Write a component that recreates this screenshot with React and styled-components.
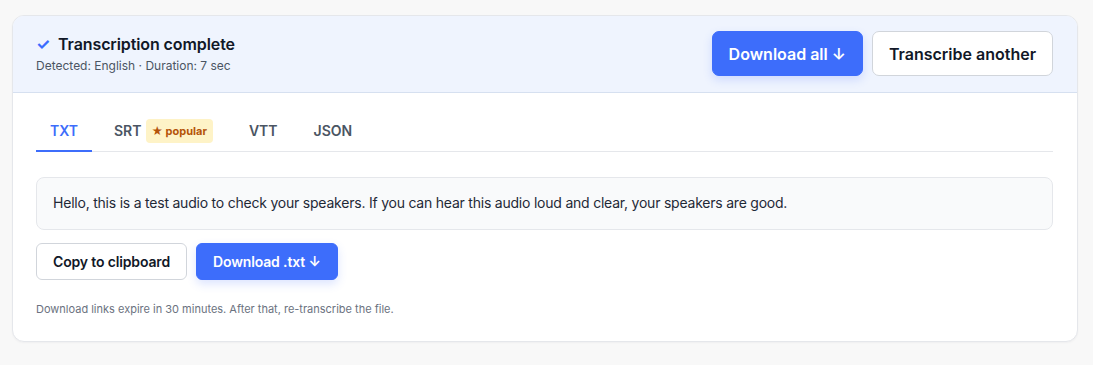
import React, { useState } from "react";
import styled, { createGlobalStyle } from "styled-components";

const GlobalStyle = createGlobalStyle`
  * { box-sizing: border-box; }
  body {
    margin: 0;
    background: #f8f8f8;
    font-family: Inter, "Noto Sans", "Liberation Sans", sans-serif;
    -webkit-font-smoothing: antialiased;
  }
`;

const Page = styled.div`
  padding: 15px 15px 24px 12px;
`;

const Card = styled.div`
  background: #fff;
  border: 1px solid #e5e7eb;
  border-radius: 12px;
  overflow: hidden;
  box-shadow: 0 1px 2px rgba(16, 24, 40, 0.04);
`;

const Header = styled.div`
  display: flex;
  align-items: center;
  justify-content: space-between;
  background: #eff4fe;
  border-bottom: 1px solid #d6e0f0;
  padding: 15px 24px 16px 23px;
`;

const Title = styled.div`
  display: flex;
  align-items: center;
  gap: 8px;
  font-size: 16px;
  font-weight: 600;
  color: #111827;
  line-height: 20px;
  letter-spacing: -0.1px;
`;

const Check = styled.span`
  color: #3b6cff;
  font-size: 16px;
  font-weight: 700;
  width: 14px;
`;

const Sub = styled.div`
  margin-top: 4px;
  font-size: 12px;
  color: #4b5563;
  line-height: 16px;
`;

const Actions = styled.div`
  display: flex;
  gap: 9px;
`;

const Button = styled.button`
  font-family: inherit;
  font-weight: 600;
  font-size: ${(p) => (p.$large ? "16px" : "14px")};
  height: ${(p) => (p.$large ? "45px" : "37px")};
  padding: 0 16px;
  letter-spacing: ${(p) => (p.$large ? "0" : "-0.15px")};
  border-radius: ${(p) => (p.$large ? "7px" : "6px")};
  cursor: pointer;
  border: 1px solid ${(p) => (p.$primary ? "#3d6dfb" : "#d1d5db")};
  background: ${(p) => (p.$primary ? "#3d6dfb" : "#fff")};
  color: ${(p) => (p.$primary ? "#fff" : "#111827")};
  box-shadow: ${(p) =>
    p.$primary ? "0 4px 10px rgba(59, 108, 255, 0.18)" : "none"};
`;

const Body = styled.div`
  padding: 14px 24px 24px 23px;
`;

const Tabs = styled.div`
  display: flex;
  gap: 8px;
  border-bottom: 1px solid #e5e7eb;
`;

const Tab = styled.div`
  display: flex;
  align-items: center;
  gap: 4px;
  padding: 12px 14px 7px;
  font-size: 14px;
  font-weight: 600;
  line-height: 20px;
  color: ${(p) => (p.$active ? "#3d6dfb" : "#4b5563")};
  border-bottom: 2px solid ${(p) => (p.$active ? "#3d6dfb" : "transparent")};
  margin-bottom: -1px;
  cursor: pointer;
`;

const Badge = styled.span`
  display: inline-flex;
  align-items: center;
  gap: 3px;
  background: #fef3c7;
  color: #b45309;
  font-size: 11px;
  font-weight: 700;
  padding: 4px 6px;
  border-radius: 4px;
  line-height: 16px;
`;

const TextBox = styled.div`
  margin-top: 25px;
  background: #f9fafb;
  border: 1px solid #e5e7eb;
  border-radius: 8px;
  padding: 15px 16px 16px;
  font-size: 14px;
  line-height: 20px;
  color: #1f2937;
  letter-spacing: -0.22px;
`;

const Row = styled.div`
  display: flex;
  gap: 9px;
  margin-top: 13px;
`;

const Note = styled.div`
  margin-top: 21px;
  font-size: 11px;
  line-height: 16px;
  color: #6b7280;
`;

const tabs = ["TXT", "SRT", "VTT", "JSON"];

export default function App() {
  const [active, setActive] = useState("TXT");
  return (
    <>
      <GlobalStyle />
      <Page>
        <Card>
          <Header>
            <div>
              <Title>
                <Check>✓</Check>
                Transcription complete
              </Title>
              <Sub>Detected: English · Duration: 7 sec</Sub>
            </div>
            <Actions>
              <Button $primary $large>
                Download all ↓
              </Button>
              <Button $large>Transcribe another</Button>
            </Actions>
          </Header>
          <Body>
            <Tabs>
              {tabs.map((t) => (
                <Tab key={t} $active={t === active} onClick={() => setActive(t)}>
                  {t}
                  {t === "SRT" && <Badge>★ popular</Badge>}
                </Tab>
              ))}
            </Tabs>
            <TextBox>
              Hello, this is a test audio to check your speakers. If you can
              hear this audio loud and clear, your speakers are good.
            </TextBox>
            <Row>
              <Button>Copy to clipboard</Button>
              <Button $primary>Download .{active.toLowerCase()} ↓</Button>
            </Row>
            <Note>
              Download links expire in 30 minutes. After that, re-transcribe the
              file.
            </Note>
          </Body>
        </Card>
      </Page>
    </>
  );
}
